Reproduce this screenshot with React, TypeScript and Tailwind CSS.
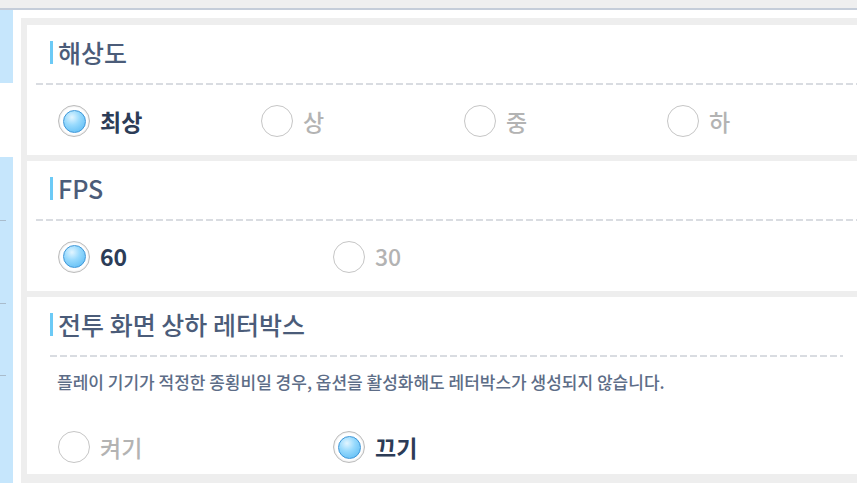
import { useState } from "react";

const font = { fontFamily: '"Noto Sans CJK KR", "Noto Sans", sans-serif' };

function Radio({
  label,
  checked,
  onClick,
  width,
}: {
  label: string;
  checked: boolean;
  onClick: () => void;
  width: string;
}) {
  return (
    <button type="button" onClick={onClick} className={`flex items-center gap-[10px] shrink-0 ${width}`}>
      <span
        className={`flex h-[32px] w-[32px] items-center justify-center rounded-full bg-white ${
          checked ? "border-[1.5px] border-[#bcbcbc] shadow-[inset_0_0_2px_#d0d0d0]" : "border-[1.5px] border-[#c6c6c6]"
        }`}
      >
        {checked && (
          <span className="h-[23px] w-[23px] rounded-full border border-[#3f97d8] bg-[radial-gradient(circle_at_38%_30%,#e2f5ff_0%,#98dafd_40%,#52b6f2_100%)]" />
        )}
      </span>
      <span
        className={`text-[23px] leading-none ${checked ? "font-bold text-[#2c3c57]" : "font-medium text-[#b3b3b3]"}`}
      >
        {label}
      </span>
    </button>
  );
}

function Heading({ title }: { title: string }) {
  return (
    <div className="flex h-[58px] items-center pb-[4px] pl-[23px]">
      <span className="h-[23px] w-[3px] bg-[#6ccaf6]" />
      <span className="ml-[5px] text-[25px] font-medium leading-none text-[#4b5c79]">{title}</span>
    </div>
  );
}

function Dashes({ className }: { className: string }) {
  return (
    <div
      className={`h-[2px] bg-[linear-gradient(to_right,#d9dce1_7px,transparent_7px)] bg-size-[10px_2px] ${className}`}
    />
  );
}

export default function App() {
  const [res, setRes] = useState("최상");
  const [fps, setFps] = useState("60");
  const [letterbox, setLetterbox] = useState("끄기");

  return (
    <div className="flex h-[483px] w-[857px] flex-col overflow-hidden bg-white" style={font}>
      <div className="h-[8px] shrink-0 bg-[#efefef]" />
      <div className="h-[2px] shrink-0 bg-[#c5cdd9]" />
      <div className="flex flex-1">
        <div className="flex w-[13px] shrink-0 flex-col">
          <div className="h-[73px] bg-[#c6e6fc]" />
          <div className="h-[74px]" />
          <div className="flex flex-1 flex-col bg-[#c6e6fc]">
            <div className="mt-[63px] h-px w-[6px] bg-[#a9bccc]" />
            <div className="mt-[82px] h-px w-[6px] bg-[#a9bccc]" />
            <div className="mt-[71px] h-px w-[6px] bg-[#a9bccc]" />
          </div>
        </div>
        <div className="ml-[8px] mt-[8px] flex w-[900px] shrink-0 flex-col gap-[6px] bg-[#eeeeee] px-[6px] pt-[7px]">
          <div className="h-[130px] bg-white">
            <Heading title="해상도" />
            <Dashes className="ml-[9px]" />
            <div className="flex h-[72px] items-center pl-[31px]">
              {["최상", "상", "중", "하"].map((o) => (
                <Radio key={o} label={o} checked={res === o} onClick={() => setRes(o)} width="w-[203px]" />
              ))}
            </div>
          </div>
          <div className="h-[130px] bg-white">
            <Heading title="FPS" />
            <Dashes className="ml-[9px]" />
            <div className="flex h-[71px] items-center pl-[31px]">
              {["60", "30"].map((o) => (
                <Radio key={o} label={o} checked={fps === o} onClick={() => setFps(o)} width="w-[275px]" />
              ))}
            </div>
          </div>
          <div className="h-[177px] bg-white">
            <Heading title="전투 화면 상하 레터박스" />
            <Dashes className="ml-[23px] w-[793px]" />
            <p className="pl-[30px] pt-[14px] text-[17px] font-medium leading-[22px] text-[#5d6d87]">
              플레이 기기가 적정한 종횡비일 경우, 옵션을 활성화해도 레터박스가 생성되지 않습니다.
            </p>
            <div className="mt-[38px] flex items-center pl-[31px]">
              {["켜기", "끄기"].map((o) => (
                <Radio
                  key={o}
                  label={o}
                  checked={letterbox === o}
                  onClick={() => setLetterbox(o)}
                  width="w-[275px]"
                />
              ))}
            </div>
          </div>
        </div>
      </div>
    </div>
  );
}
